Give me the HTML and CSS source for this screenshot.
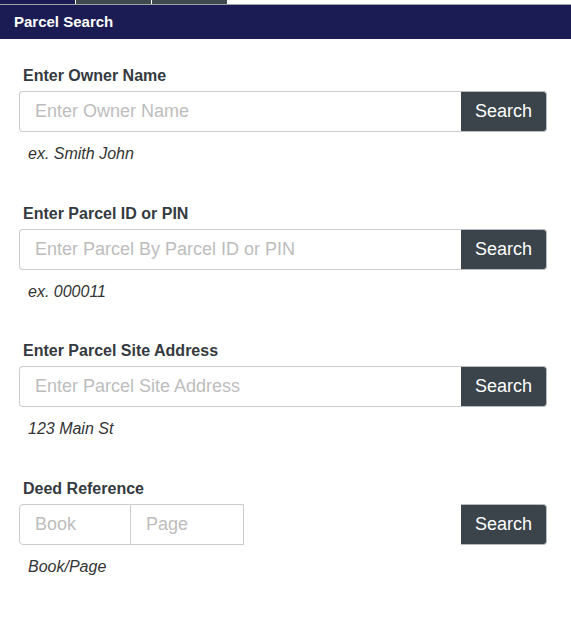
FILE: index.html
```html
<!DOCTYPE html>
<html>
<head>
<meta charset="utf-8">
<link rel="stylesheet" href="styles.css">
</head>
<body>
<div class="tabs">
  <span class="tab tab-active"></span>
  <span class="tab"></span>
  <span class="tab"></span>
</div>
<div class="header">Parcel Search</div>
<div class="content">
  <div class="group">
    <label class="label">Enter Owner Name</label>
    <div class="input-group">
      <input class="field field-wide" type="text" placeholder="Enter Owner Name">
      <button class="btn">Search</button>
    </div>
    <p class="help">ex. Smith John</p>
  </div>
  <div class="group">
    <label class="label">Enter Parcel ID or PIN</label>
    <div class="input-group">
      <input class="field field-wide" type="text" placeholder="Enter Parcel By Parcel ID or PIN">
      <button class="btn">Search</button>
    </div>
    <p class="help">ex. 000011</p>
  </div>
  <div class="group">
    <label class="label">Enter Parcel Site Address</label>
    <div class="input-group">
      <input class="field field-wide" type="text" placeholder="Enter Parcel Site Address">
      <button class="btn">Search</button>
    </div>
    <p class="help">123 Main St</p>
  </div>
  <div class="group">
    <label class="label">Deed Reference</label>
    <div class="input-group">
      <input class="field field-small field-first" type="text" placeholder="Book">
      <input class="field field-small field-second" type="text" placeholder="Page">
      <span class="spacer"></span>
      <button class="btn">Search</button>
    </div>
    <p class="help">Book/Page</p>
  </div>
</div>
</body>
</html>
```

FILE: styles.css
```css
html, body {
  margin: 0;
  padding: 0;
  background: #ffffff;
  font-family: "Liberation Sans", Arial, sans-serif;
}

.tabs {
  display: flex;
  height: 4px;
  gap: 1px;
}

.tab {
  width: 75px;
  background: #3d494e;
}

.tab-active {
  background: #1b1c54;
}

.header {
  border-top: 1px solid #9ea3ad;
  height: 34px;
  line-height: 34px;
  background: #1b1c54;
  color: #ffffff;
  font-weight: bold;
  font-size: 15px;
  padding-left: 14px;
}

.content {
  padding: 27px 24px 0 19px;
}

.group {
  margin-bottom: 38.67px;
}

.label {
  display: block;
  font-weight: bold;
  font-size: 16px;
  line-height: 20px;
  color: #343a40;
  padding-left: 4px;
  margin-bottom: 5px;
}

.input-group {
  display: flex;
  height: 41px;
}

.field {
  box-sizing: border-box;
  height: 41px;
  border: 1px solid #cccccc;
  font-family: "Liberation Sans", Arial, sans-serif;
  font-size: 18px;
  padding: 0 15px;
  color: #333;
  outline: none;
  margin: 0;
}

.field::placeholder {
  color: #bdbdbd;
}

.field-wide {
  flex: 1;
  min-width: 0;
  border-radius: 4px 0 0 4px;
  border-right: none;
}

.field-small {
  width: 112px;
}

.field-first {
  border-radius: 4px 0 0 4px;
}

.field-second {
  width: 113px;
  border-left: none;
  border-radius: 0;
}

.spacer {
  flex: 1;
}

.btn {
  box-sizing: border-box;
  width: 86px;
  height: 41px;
  margin: 0;
  border: 1px solid #b8bcbf;
  border-left: none;
  border-radius: 0 4px 4px 0;
  background: #3a444a;
  color: #ffffff;
  font-family: "Liberation Sans", Arial, sans-serif;
  font-size: 18px;
  padding: 0;
}

.help {
  margin: 11px 0 0 0;
  padding-left: 9px;
  font-style: italic;
  font-size: 16px;
  line-height: 22px;
  color: #333333;
}
```
